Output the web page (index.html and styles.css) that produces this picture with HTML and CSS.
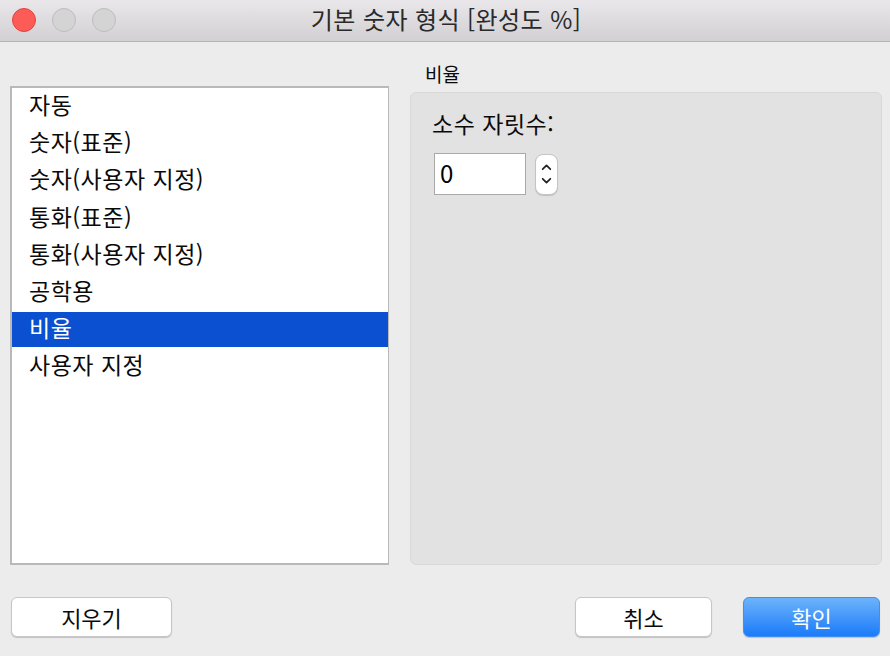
FILE: index.html
```html
<!DOCTYPE html>
<html lang="ko">
<head>
<meta charset="utf-8">
<link rel="stylesheet" href="styles.css">
</head>
<body>
<div class="window">
  <div class="titlebar">
    <div class="lights">
      <span class="light close"></span>
      <span class="light"></span>
      <span class="light"></span>
    </div>
    <div class="title">기본 숫자 형식 [완성도 %]</div>
  </div>
  <div class="content">
    <ul class="list">
      <li>자동</li>
      <li>숫자(표준)</li>
      <li>숫자(사용자 지정)</li>
      <li>통화(표준)</li>
      <li>통화(사용자 지정)</li>
      <li>공학용</li>
      <li class="selected">비율</li>
      <li>사용자 지정</li>
    </ul>
    <div class="side">
      <div class="side-label">비율</div>
      <div class="group">
        <div class="field-label">소수 자릿수:</div>
        <div class="field-row">
          <div class="input">0</div>
          <div class="stepper">
            <svg width="22" height="40" viewBox="0 0 22 40">
              <path d="M7 15 L11 11 L15 15" fill="none" stroke="#222" stroke-width="1.8" stroke-linecap="round" stroke-linejoin="round"/>
              <path d="M7 25 L11 29 L15 25" fill="none" stroke="#222" stroke-width="1.8" stroke-linecap="round" stroke-linejoin="round"/>
            </svg>
          </div>
        </div>
      </div>
    </div>
  </div>
  <div class="footer">
    <button class="btn clear">지우기</button>
    <div class="right-btns">
      <button class="btn cancel">취소</button>
      <button class="btn primary">확인</button>
    </div>
  </div>
</div>
</body>
</html>
```
FILE: styles.css
```css
* { box-sizing: border-box; }
html, body {
  margin: 0;
  padding: 0;
  background: #ececec;
}
body {
  font-family: "Noto Sans CJK KR", "Noto Sans", sans-serif;
  font-weight: 400;
  color: #111;
}
.window {
  width: 890px;
  height: 656px;
  display: flex;
  flex-direction: column;
  background: #ececec;
}
.titlebar {
  position: relative;
  height: 42px;
  background: linear-gradient(#e9e7e9, #d2d0d2);
  border-bottom: 1px solid #b4b4b4;
  display: flex;
  align-items: center;
  justify-content: center;
}
.lights {
  position: absolute;
  left: 12px;
  top: 8px;
  display: flex;
  gap: 16px;
}
.light {
  width: 24px;
  height: 24px;
  border-radius: 50%;
  background: #d4d4d4;
  border: 1px solid #bdbdbd;
}
.light.close {
  background: #fc5b57;
  border-color: #e2453f;
}
.title {
  font-size: 24px;
  line-height: 30px;
  letter-spacing: 0.4px;
  color: #2a2a2a;
  margin-top: -3px;
  margin-left: 2px;
}
.content {
  display: flex;
  padding: 21px 8px 0 10px;
  height: 524px;
}
.list {
  list-style: none;
  margin: 23px 0 0 0;
  padding: 0;
  width: 379px;
  height: 479px;
  background: #fff;
  border: 2px solid #b9b9b9;
  border-right-width: 1px;
  border-bottom-width: 2px;
}
.list li {
  height: 37.2px;
  line-height: 31px;
  padding-left: 17px;
  font-size: 23px;
  letter-spacing: 0.5px;
  color: #0a0a0a;
  border-top: 1px solid transparent;
  border-bottom: 1px solid transparent;
  background-clip: padding-box;
}
.list li.selected {
  background-color: #0b50d0;
  color: #fff;
}
.side {
  flex: 1;
  margin-left: 21px;
  display: flex;
  flex-direction: column;
}
.side-label {
  font-size: 19px;
  line-height: 22px;
  padding-left: 15px;
  height: 29px;
  color: #0a0a0a;
}
.group {
  height: 473px;
  background: #e2e2e2;
  border: 1px solid #d9d9d9;
  border-radius: 6px;
  padding: 15px 0 0 21px;
}
.field-label {
  font-size: 23px;
  line-height: 30px;
  letter-spacing: 0.5px;
  color: #0a0a0a;
}
.field-row {
  display: flex;
  align-items: center;
  gap: 9px;
  margin-top: 15px;
  margin-left: 2px;
}
.input {
  width: 92px;
  height: 42px;
  background: #fff;
  border: 1px solid #a9a9a9;
  font-size: 24px;
  line-height: 38px;
  padding-left: 5px;
  color: #000;
}
.stepper {
  width: 23px;
  height: 41px;
  background: #fff;
  border: 1px solid #c4c4c4;
  border-radius: 8px;
  box-shadow: 0 1px 1px rgba(0,0,0,0.15);
  display: flex;
  align-items: center;
  justify-content: center;
  overflow: hidden;
}
.footer {
  display: flex;
  justify-content: space-between;
  padding: 31px 10px 0 11px;
}
.right-btns {
  display: flex;
  gap: 31px;
}
.btn {
  font-family: "Noto Sans CJK KR", "Noto Sans", sans-serif;
  font-weight: 400;
  font-size: 22px;
  line-height: 34px;
  height: 40px;
  padding: 0;
  border-radius: 6px;
  background: #fff;
  border: 1px solid #c6c6c6;
  box-shadow: 0 1px 1px rgba(0,0,0,0.18);
  color: #0a0a0a;
}
.btn.clear { width: 161px; }
.btn.cancel { width: 137px; }
.btn.primary {
  width: 137px;
  color: #fff;
  border: 1px solid #3f8ef5;
  background: linear-gradient(#6db3fb, #1b7bf9);
}
```
